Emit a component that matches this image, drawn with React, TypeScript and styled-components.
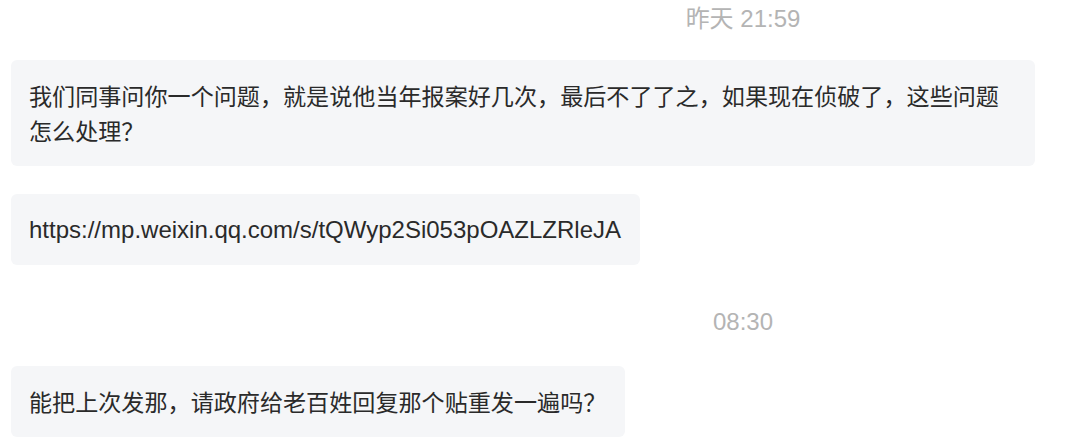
import styled, { createGlobalStyle } from "styled-components";

const GlobalStyle = createGlobalStyle`
  html, body {
    margin: 0;
    padding: 0;
    background: #ffffff;
  }
  body {
    font-family: "Liberation Sans", "Noto Sans CJK SC", sans-serif;
    -webkit-font-smoothing: antialiased;
  }
`;

const StyledThread = styled.div`
  width: 1080px;
  height: 444px;
  overflow: hidden;
  box-sizing: border-box;
  padding: 5px 45px 0 11px;
  display: flex;
  flex-direction: column;
`;

const StyledTimestamp = styled.div<{ $top: number; $bottom: number }>`
  margin-top: ${(p) => p.$top}px;
  margin-bottom: ${(p) => p.$bottom}px;
  padding-left: 440px;
  display: flex;
  justify-content: center;
  font-size: 24px;
  line-height: 28px;
  color: #b4b4b4;
  white-space: nowrap;
`;

const StyledRow = styled.div<{ $bottom: number }>`
  display: flex;
  justify-content: flex-start;
  margin-bottom: ${(p) => p.$bottom}px;
`;

const StyledBubble = styled.div<{ $cjk?: boolean }>`
  max-width: 100%;
  box-sizing: border-box;
  padding: 18px 19px 18px 18px;
  background: #f5f6f8;
  border-radius: 6px;
  font-family: ${(p) =>
    p.$cjk ? `"Noto Sans CJK SC", sans-serif` : `"Liberation Sans", sans-serif`};
  font-size: ${(p) => (p.$cjk ? "23.1px" : "24px")};
  line-height: 35px;
  color: #2a2a2a;
  word-break: break-all;
`;

type Item =
  | { kind: "time"; text: string; top: number; bottom: number }
  | { kind: "msg"; text: string; bottom: number; cjk?: boolean };

const items: Item[] = [
  { kind: "time", text: "昨天 21:59", top: 0, bottom: 27 },
  {
    kind: "msg",
    text: "我们同事问你一个问题，就是说他当年报案好几次，最后不了了之，如果现在侦破了，这些问题怎么处理？",
    bottom: 28,
    cjk: true,
  },
  {
    kind: "msg",
    text: "https://mp.weixin.qq.com/s/tQWyp2Si053pOAZLZRleJA",
    bottom: 0,
  },
  { kind: "time", text: "08:30", top: 43, bottom: 30 },
  {
    kind: "msg",
    text: "能把上次发那，请政府给老百姓回复那个贴重发一遍吗？",
    bottom: 0,
    cjk: true,
  },
];

export default function App() {
  return (
    <>
      <GlobalStyle />
      <StyledThread>
        {items.map((item, idx) =>
          item.kind === "time" ? (
            <StyledTimestamp key={idx} $top={item.top} $bottom={item.bottom}>
              {item.text}
            </StyledTimestamp>
          ) : (
            <StyledRow key={idx} $bottom={item.bottom}>
              <StyledBubble $cjk={item.cjk}>{item.text}</StyledBubble>
            </StyledRow>
          )
        )}
      </StyledThread>
    </>
  );
}
